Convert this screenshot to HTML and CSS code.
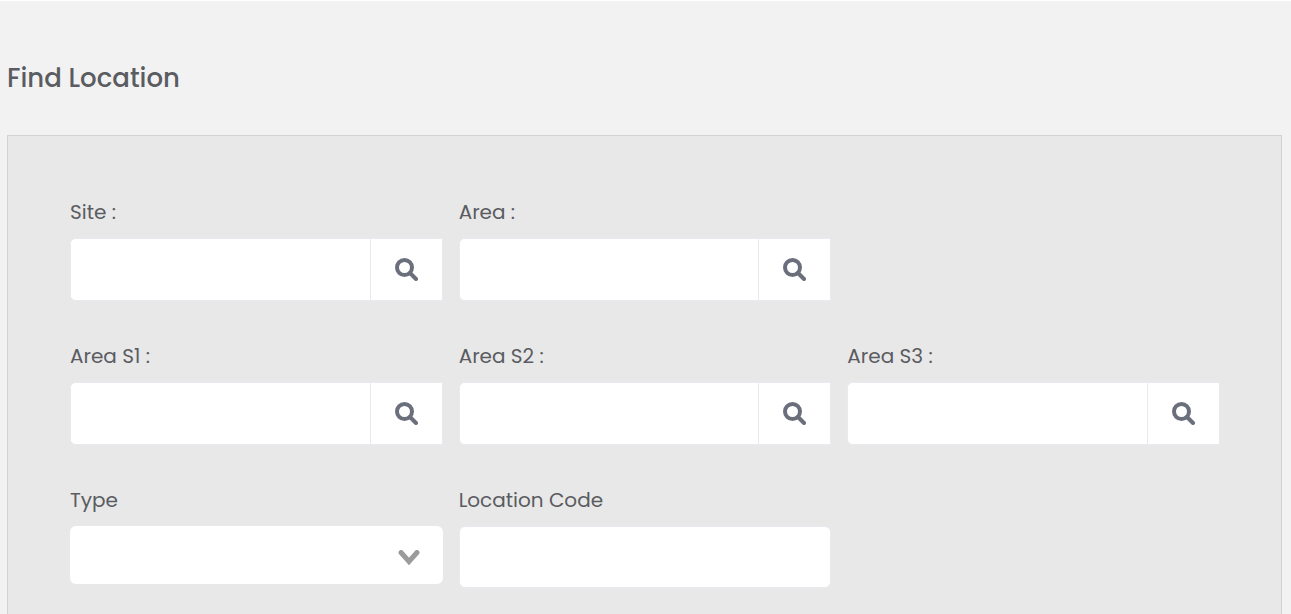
FILE: index.html
```html
<!DOCTYPE html>
<html lang="en">
<head>
<meta charset="utf-8">
<meta name="viewport" content="width=device-width, initial-scale=1">
<title>Find Location</title>
<link rel="stylesheet" href="styles.css">
</head>
<body>
<svg class="sprite" aria-hidden="true">
  <symbol id="icon-search" viewBox="0 0 23 23"><circle cx="9.500" cy="9.500" r="7.500"/><path class="handle" d="M15 15l6 6"/></symbol>
</svg>
<main class="page">
  <h1 class="title">Find Location</h1>
  <form class="panel">
    <div class="row">
      <div class="field">
        <label class="label" for="site">Site :</label>
        <div class="lookup">
          <input class="lookup-input" id="site" type="text">
          <button class="lookup-button" type="button" aria-label="Search site"><svg class="icon"><use href="#icon-search"/></svg></button>
        </div>
      </div>
      <div class="field">
        <label class="label" for="area">Area :</label>
        <div class="lookup">
          <input class="lookup-input" id="area" type="text">
          <button class="lookup-button" type="button" aria-label="Search area"><svg class="icon"><use href="#icon-search"/></svg></button>
        </div>
      </div>
    </div>
    <div class="row">
      <div class="field">
        <label class="label" for="area-s1">Area S1 :</label>
        <div class="lookup">
          <input class="lookup-input" id="area-s1" type="text">
          <button class="lookup-button" type="button" aria-label="Search area S1"><svg class="icon"><use href="#icon-search"/></svg></button>
        </div>
      </div>
      <div class="field">
        <label class="label" for="area-s2">Area S2 :</label>
        <div class="lookup">
          <input class="lookup-input" id="area-s2" type="text">
          <button class="lookup-button" type="button" aria-label="Search area S2"><svg class="icon"><use href="#icon-search"/></svg></button>
        </div>
      </div>
      <div class="field">
        <label class="label" for="area-s3">Area S3 :</label>
        <div class="lookup">
          <input class="lookup-input" id="area-s3" type="text">
          <button class="lookup-button" type="button" aria-label="Search area S3"><svg class="icon"><use href="#icon-search"/></svg></button>
        </div>
      </div>
    </div>
    <div class="row">
      <div class="field">
        <label class="label" for="type">Type</label>
        <div class="select-wrap">
          <select class="select" id="type"><option></option></select>
          <svg class="chevron" viewBox="0 0 22 16" aria-hidden="true"><path d="M3 2.500l8 9 8-9"/></svg>
        </div>
      </div>
      <div class="field">
        <label class="label" for="code">Location Code</label>
        <input class="text-input" id="code" type="text">
      </div>
    </div>
  </form>
</main>
</body>
</html>
```
FILE: styles.css
```css
* {
  box-sizing: border-box;
}

body {
  margin: 0;
  background: #f2f2f2;
  color: #5a5c61;
  font-family: Poppins, Inter, "Open Sans", sans-serif;
  font-size: 20px;
}

.sprite {
  display: none;
}

.page {
  display: flex;
  flex-direction: column;
  min-height: 100vh;
  padding: 57px 9px 0 7px;
  border-top: 1px solid #fff;
}

.title {
  margin: 0 0 37px;
  font-size: 26px;
  font-weight: 500;
  line-height: 40px;
}

.panel {
  flex: 1;
  display: flex;
  flex-direction: column;
  gap: 40px;
  padding: 61px 61px 26px 62px;
  background: #e8e8e8;
  border: 1px solid #d2d2d2;
  border-bottom: 0;
}

.row {
  display: grid;
  grid-template-columns: repeat(3, 1fr);
  gap: 16px;
}

.field {
  min-width: 0;
}

.label {
  display: block;
  margin-bottom: 11px;
  line-height: 30px;
}

.lookup {
  display: flex;
  height: 63px;
  border: 1px solid #e9eaef;
  border-radius: 6px 0 0 6px;
  background: #fff;
  overflow: hidden;
}

.lookup-input {
  flex: 1;
  min-width: 0;
  padding: 0 16px;
  border: 0;
  background: #fff;
  color: inherit;
  font: inherit;
}

.lookup-button {
  display: flex;
  align-items: center;
  justify-content: center;
  width: 72px;
  padding: 0;
  border: 0;
  border-left: 1px solid #e9eaef;
  background: #fff;
  color: #6b6f7c;
}

.icon {
  width: 23px;
  height: 23px;
  fill: none;
  stroke: currentColor;
  stroke-width: 4;
}

.handle {
  stroke-linecap: round;
}

.select-wrap {
  display: grid;
  align-items: center;
}

.select,
.chevron {
  grid-area: 1 / 1;
}

.select {
  width: 100%;
  height: 58px;
  padding: 0 56px 0 16px;
  border: 0;
  border-radius: 6px;
  appearance: none;
  background: #fff;
  color: inherit;
  font: inherit;
}

.chevron {
  justify-self: end;
  width: 22px;
  height: 16px;
  margin: 6px 23px 0 0;
  fill: none;
  stroke: #9b9b9b;
  stroke-width: 5;
  stroke-linecap: round;
  pointer-events: none;
}

.text-input {
  display: block;
  width: 100%;
  height: 62px;
  padding: 0 16px;
  border: 1px solid #e9eaef;
  border-radius: 6px;
  background: #fff;
  color: inherit;
  font: inherit;
}
```
